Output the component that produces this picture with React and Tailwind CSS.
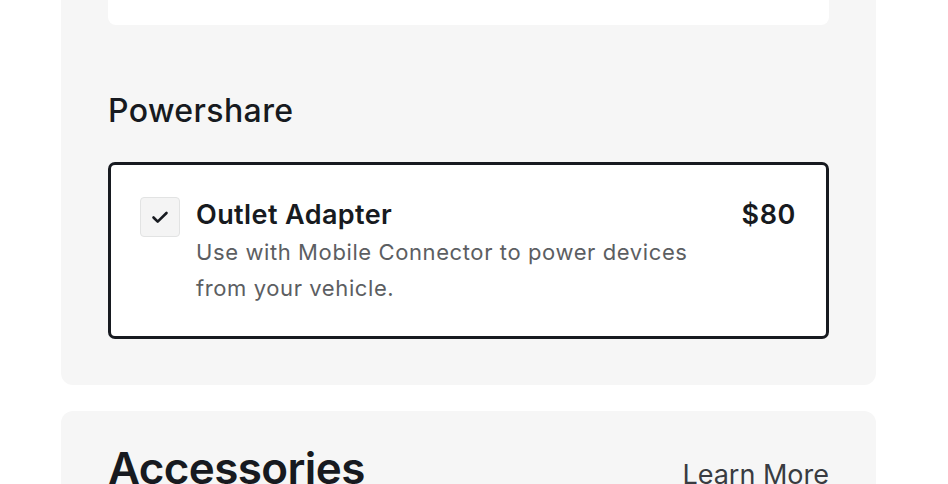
import React from 'react';

const font = { fontFamily: 'Inter, "Noto Sans", sans-serif' };

const CheckIcon = () => (
  <svg width="24" height="24" viewBox="0 0 24 24" fill="none" aria-hidden="true">
    <path d="M5.5 12.5l4.2 4.2L18.5 8" stroke="#171a20" strokeWidth="2.6" strokeLinecap="round" strokeLinejoin="round" />
  </svg>
);

export default function App() {
  return (
    <div className="min-h-screen bg-white overflow-hidden" style={font}>
      <div className="ml-[61px] w-[815px] flex flex-col">
        {/* Powershare panel */}
        <section className="bg-[#f6f6f6] rounded-b-[12px] px-[47px] pb-[46px]">
          <div className="h-[25px] bg-white rounded-b-[8px]" />
          <h2 className="mt-[67px] text-[32px] leading-[38px] font-medium text-[#171a20] tracking-[0.4px]">
            Powershare
          </h2>
          <div className="mt-[32px] h-[177px] bg-white border-[3px] border-[#171a20] rounded-[7px] pl-[29px] pr-[30px] pt-[32px] flex gap-[16px]">
            <div className="w-[40px] h-[40px] shrink-0 rounded-[4px] bg-[#f4f4f4] border border-[#e2e3e3] flex items-center justify-center">
              <CheckIcon />
            </div>
            <div className="flex-1 pt-[1px]">
              <div className="flex justify-between items-start">
                <h3 className="text-[27px] leading-[34px] font-semibold text-[#171a20] tracking-[0.4px]">Outlet Adapter</h3>
                <span className="text-[27px] leading-[34px] font-semibold text-[#171a20] tracking-[0.6px]">$80</span>
              </div>
              <p className="mt-[2px] text-[22px] leading-[36px] text-[#5c5e62] tracking-[0.6px] max-w-[520px]">
                Use with Mobile Connector to power devices from your vehicle.
              </p>
            </div>
          </div>
        </section>

        {/* Accessories panel */}
        <section className="mt-[26px] bg-[#f6f6f6] rounded-t-[12px] px-[47px] pt-[30px] h-[200px]">
          <div className="flex justify-between items-baseline">
            <h2 className="text-[44px] leading-[54px] font-semibold text-[#171a20] tracking-[-0.6px]">Accessories</h2>
            <a className="text-[27px] text-[#393c41]">Learn More</a>
          </div>
        </section>
      </div>
    </div>
  );
}
